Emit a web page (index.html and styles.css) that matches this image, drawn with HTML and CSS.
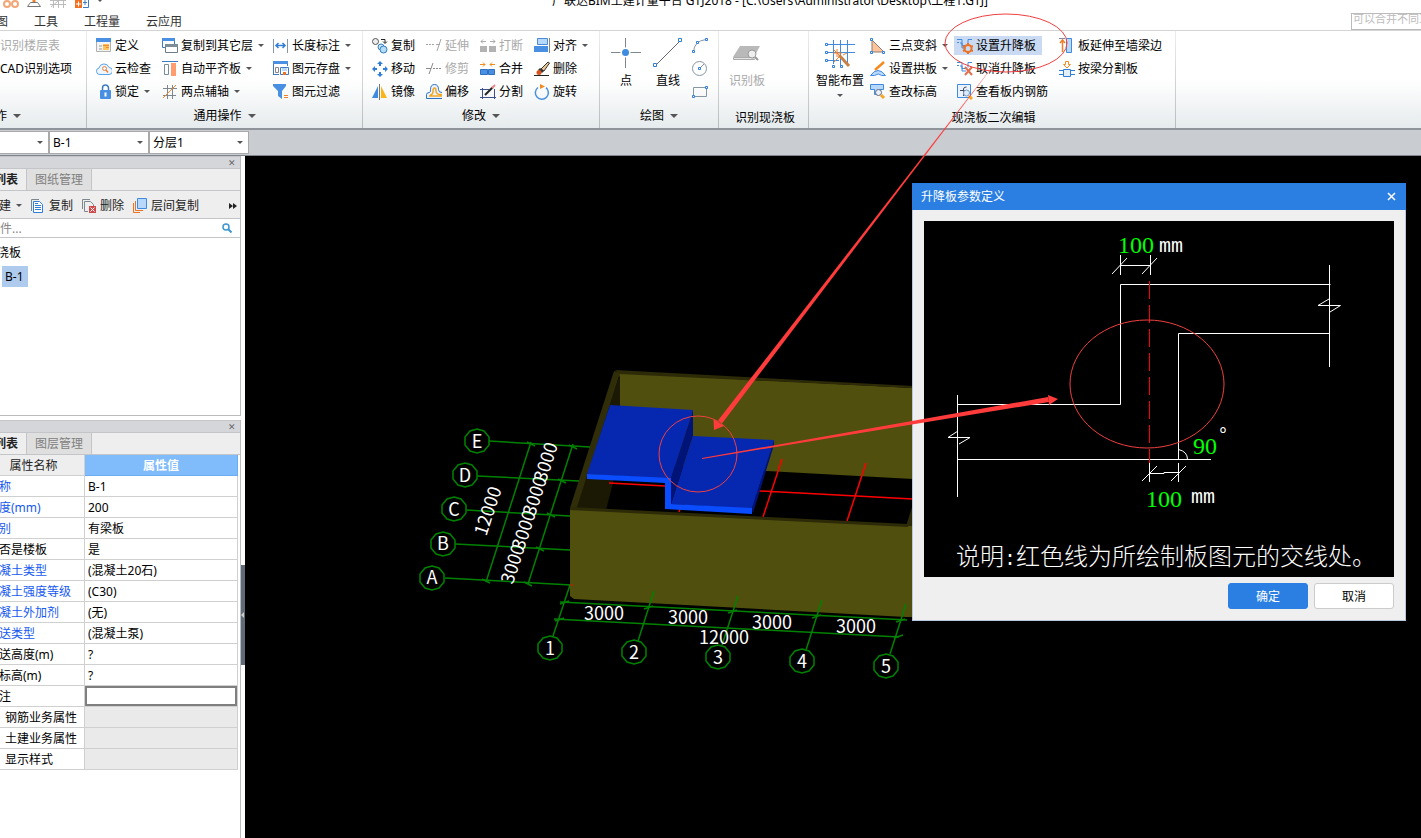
FILE: index.html
```html
<!DOCTYPE html>
<html lang="zh-CN">
<head>
    <meta charset="utf-8">
    <title>GTJ2018</title>
    <link rel="stylesheet" href="styles.css">
</head>
<body>
    <header class="titlebar">
        <div class="quick">
            <svg width="16" height="16" viewBox="0 0 16 16" fill="none" stroke="#f0a878" stroke-width="2"><path d="M3 5l2-1M13 5l-2-1" stroke="#aaa"/><circle cx="4" cy="11" r="3"/><circle cx="12" cy="11" r="3"/></svg>
            <svg width="16" height="16" viewBox="0 0 16 16" fill="none"><path d="M8 2v8" stroke="#ef7f28" stroke-width="3"/><path d="M4.500 9.500h7l3 4h-13z" stroke="#777"/></svg>
            <svg width="18" height="16" viewBox="0 0 18 16" fill="none" stroke="#bbb"><path d="M1 7.500h16M1 11.500h16M4.500 1v14M14.500 1v14M9.500 1v14M2 14L15 3"/></svg>
            <svg width="16" height="16" viewBox="0 0 16 16"><path d="M1 7h7v8H1z" fill="#ef7122"/><path d="M4.500 8.500v5M2 11h5" stroke="#fff"/><path d="M9 14.500h5.500V2" fill="none" stroke="#3d7cc4"/><path d="M9 9.500h4M11 7v5" stroke="#3d7cc4"/></svg>
            <i class="arrow"></i>
        </div>
        <div class="caption">广联达BIM土建计量平台 GTJ2018 - [C:\Users\Administrator\Desktop\工程1.GTJ]</div>
    </header>
    <nav class="menu">
        <a href="#">图</a>
        <a href="#">工具</a>
        <a href="#">工程量</a>
        <a href="#">云应用</a>
        <input class="help-search" type="text" placeholder="可以合并不同工" aria-label="search">
    </nav>

    <div class="ribbon">
        <section class="group g-first">
            <div class="cells one">
                <button class="tool" disabled>识别楼层表</button>
                <button class="tool">CAD识别选项</button>
            </div>
            <div class="group-title">作<i class="arrow big"></i></div>
        </section>

        <section class="group g-common">
            <div class="cells">
                <button class="tool"><svg viewBox="0 0 16 16"><path d="M.5.500h14v13H.5z" fill="#f4f4f4" stroke="#b0b0b0"/><path d="M0 0h15v4H0z" fill="#4a90e2"/><path d="M3 8h3M3 11h3" stroke="#999"/><path d="M7 6h6v6H7z" fill="#ffc35c"/><path d="M7 7.500h6M10 9.500h3" stroke="#f08a2c"/></svg>定义</button>
                <button class="tool"><svg viewBox="0 0 16 16"><path d="M.5.500h12v9H.5z" fill="#fff" stroke="#3d7cc4"/><path d="M0 0h13v3H0z" fill="#4a90e2"/><path d="M3.500 6.500h12v8h-12z" fill="#fff" stroke="#6c7d89"/><path d="M3 6h13v3H3z" fill="#7d8d98"/></svg>复制到其它层<i class="arrow"></i></button>
                <button class="tool"><svg viewBox="0 0 16 16" fill="none"><path d="M.5 1v14M14.500 1v14" stroke="#8796a3"/><path d="M3 7.500h9M5.500 5L3 7.500 5.500 10M9.500 5L12 7.500 9.500 10" stroke="#2f7ed8" stroke-width="1.500"/></svg>长度标注<i class="arrow"></i></button>
                <button class="tool"><svg viewBox="0 0 16 16" fill="none"><path d="M4 13.500a3.300 3.300 0 0 1-1-6.500 5.200 5.200 0 0 1 10-.5 3.500 3.500 0 0 1 0 7z" fill="#eef6ff" stroke="#5ba1ea"/><circle cx="8.500" cy="7.500" r="2" stroke="#ef8332"/><path d="M10 9l2 2.500" stroke="#ef8332" stroke-width="1.500"/></svg>云检查</button>
                <button class="tool"><svg viewBox="0 0 16 16"><path d="M0 .5h16" stroke="#3d7cc4"/><path d="M2.500 3.500h4v10h-4z" fill="#fff" stroke="#7d8d98"/><path d="M9 2h5v13H9z" fill="#ff9c70"/></svg>自动平齐板<i class="arrow"></i></button>
                <button class="tool"><svg viewBox="0 0 16 16" fill="none"><path d="M.5 13.500V.500h14V5M0 13.500h6" stroke="#3d7cc4"/><path d="M0 1.500h15" stroke="#4a90e2" stroke-width="3"/><path d="M2.500 6.500h3v5h-3z" stroke="#888"/><path d="M7.500 6.500h8v7h-8z" fill="#fff" stroke="#3d7cc4"/><path d="M9 7h5v3H9z" fill="#b7d7fb"/><path d="M10 11h3v3h-3z" fill="#ef7122"/></svg>图元存盘<i class="arrow"></i></button>
                <button class="tool"><svg viewBox="0 0 16 16"><path d="M6.500 7V4a3 3 0 0 1 6 0v3" fill="none" stroke="#3d7cc4" stroke-width="1.500"/><rect x="4" y="6" width="11" height="9" rx="1" fill="#4a90e2"/><path d="M9.500 8.500v4" stroke="#fff" stroke-width="2"/></svg>锁定<i class="arrow"></i></button>
                <button class="tool"><svg viewBox="0 0 16 16" fill="none"><path d="M5.500 1v14M10.500 1v14M1 4.500h14M1 11.500h13" stroke="#7d8790"/><path d="M1 14L14 1" stroke="#f08a2c"/></svg>两点辅轴<i class="arrow"></i></button>
                <button class="tool"><svg viewBox="0 0 16 16"><path d="M0 0h13v2L9 7v8l-4-3V7L0 2z" fill="#4a90e2"/><path d="M11 11.500h4M11 13.500h4" stroke="#ef7f28"/></svg>图元过滤</button>
            </div>
            <div class="group-title">通用操作<i class="arrow big"></i></div>
        </section>

        <section class="group g-edit">
            <div class="cells">
                <button class="tool"><svg viewBox="0 0 16 16" fill="none"><circle cx="3.500" cy="3.500" r="3" fill="#eee" stroke="#555"/><path d="M9 1.500h4V5M11 3.500l2 2 2-2" stroke="#222"/><circle cx="9" cy="9" r="3" fill="#cfe6fb" stroke="#2f7ec0"/><circle cx="11.500" cy="11.500" r="3.500" fill="#b4dcf8" stroke="#2f7ec0"/></svg>复制</button>
                <button class="tool" disabled><svg viewBox="0 0 16 16" fill="none" stroke="#a5a5a5"><path d="M0 6.500h9" stroke-dasharray="2 1"/><path d="M10 6.500h4M15 1l-4 12"/></svg>延伸</button>
                <button class="tool" disabled><svg viewBox="0 0 16 16"><path d="M0 8h7v6H0zM9 8h7v6H9z" fill="#b2b2b2"/><path d="M1 3.500h5M3 1.500l-2 2 2 2M10 3.500h5M13 1.500l2 2-2 2" stroke="#aaa" fill="none"/></svg>打断</button>
                <button class="tool"><svg viewBox="0 0 16 16"><path d="M3.500.500h10v6h-10z" fill="#b7d7fb" stroke="#4a8bd8"/><path d="M0 8h14v6H0z" fill="#4a90e2"/><path d="M15.500 0v15" stroke="#7d8790"/></svg>对齐<i class="arrow"></i></button>
                <button class="tool"><svg viewBox="0 0 16 16" fill="#2f7ed8"><path d="M8 0l3 3H9v2H7V3H5zM8 16l3-3H9v-2H7v2H5zM0 8l3-3v2h2v2H3v2zM16 8l-3-3v2h-2v2h2v2z"/></svg>移动</button>
                <button class="tool" disabled><svg viewBox="0 0 16 16" fill="none" stroke="#8a8a8a"><path d="M0 7.500h5M7 2L3 13"/><path d="M7 7.500h9" stroke-dasharray="2 1"/></svg>修剪</button>
                <button class="tool"><svg viewBox="0 0 16 16"><path d="M.5 8.500h7v5h-7zM8.500 8.500h6v5h-6z" fill="#4a90e2" stroke="#2f6fc0"/><path d="M0 3.500h5M3 1.500l2 2-2 2M10 3.500h5M12 1.500l-2 2 2 2" stroke="#ef8c1c" fill="none"/></svg>合并</button>
                <button class="tool"><svg viewBox="0 0 16 16"><path d="M7 8l7-7 1.500 1L10 10z" fill="#e9c896" stroke="#333"/><path d="M6 7l4 3-2 2-4-3z" fill="#333"/><circle cx="5" cy="11.500" r="2.500" fill="#d9541e"/><path d="M0 14.500h15" stroke="#222"/></svg>删除</button>
                <button class="tool"><svg viewBox="0 0 16 16"><path d="M6 2v12H0z" fill="#3f8be0"/><path d="M7.500 0v16" stroke="#777"/><path d="M9 2v12h6z" fill="#fbb416"/></svg>镜像</button>
                <button class="tool"><svg viewBox="0 0 16 16" fill="none"><path d="M16 14.500H.5v-4q0-2 3-2 1 0 1-3 0-5 4-5t4 5q0 3 3.500 3" fill="#eaf3fd" stroke="#2f6fc0"/><path d="M16 12H3M4 11q3 0 3-4 0-3 1.500-3T10 7q0 4 6 3.500" stroke="#f5a623" stroke-width="1.500"/></svg>偏移</button>
                <button class="tool"><svg viewBox="0 0 16 16" fill="none"><path d="M2.500 4v11M14.500 5v10M0 5.500h9M0 13.500h16" stroke="#3e4f8a"/><path d="M5 11l8-8" stroke="#222" stroke-width="2"/><path d="M12 4l3-3" stroke="#e88" stroke-width="2"/></svg>分割</button>
                <button class="tool"><svg viewBox="0 0 16 16" fill="none"><path d="M4 3.500a6.500 6.500 0 1 0 8 .2" stroke="#4a90e2" stroke-width="1.500"/><path d="M6 0l5 2.500L6 5z" fill="#f58a1f"/></svg>旋转</button>
            </div>
            <div class="group-title">修改<i class="arrow big"></i></div>
        </section>

        <section class="group g-draw">
            <div class="wide">
                <button class="large"><svg viewBox="0 0 30 30"><path d="M14.500 0v30M0 14.500h30" stroke="#7d8790"/><circle cx="14.500" cy="14.500" r="5" fill="#fff"/><circle cx="14.500" cy="14.500" r="3.500" fill="#3f8be0"/></svg>点</button>
                <button class="large"><svg viewBox="0 0 30 30" fill="#fff"><path d="M3 27L27 3" stroke="#667"/><path d="M.5 25.500h3v3h-3zM25.500.500h3v3h-3z" stroke="#2f7ed8"/></svg>直线</button>
                <div class="cells one shapes">
                    <button class="tool" aria-label="arc"><svg viewBox="0 0 16 16" fill="#fff"><path d="M1.500 14Q2 3 14 1.500" fill="none" stroke="#8796a3"/><path d="M.5 12.500h2v2h-2zM4.500 3.500h2v2h-2zM13.500.500h2v2h-2z" stroke="#2f7ed8"/></svg></button>
                    <button class="tool" aria-label="circle"><svg viewBox="0 0 16 16" fill="none"><circle cx="7.500" cy="7.500" r="7" stroke="#8796a3"/><path d="M8 7l4-4" stroke="#889"/><path d="M6.500 6.500h2v2h-2z" stroke="#2f7ed8"/></svg></button>
                    <button class="tool" aria-label="rectangle"><svg viewBox="0 0 16 16" fill="#fff"><path d="M1.500 3.500h13v9h-13z" fill="none" stroke="#8796a3"/><path d="M.5 11.500h2v2h-2zM13.500 2.500h2v2h-2z" stroke="#2f7ed8"/></svg></button>
                </div>
            </div>
            <div class="group-title">绘图<i class="arrow big"></i></div>
        </section>

        <section class="group g-detect">
            <div class="wide">
                <button class="large" disabled><svg viewBox="0 0 30 30"><path d="M8 8h20l-6 11H1z" fill="#b9b9b9"/><path d="M1.500 19.500h20l1 2h-21z" fill="#e4e4e4" stroke="#aaa"/><circle cx="20" cy="16" r="4" fill="#eee" stroke="#999"/><path d="M23 19l3 3" stroke="#999" stroke-width="2"/></svg>识别板</button>
            </div>
            <div class="group-title low">识别现浇板</div>
        </section>

        <section class="group g-slab">
            <div class="wide">
                <button class="large smart"><svg viewBox="0 0 30 30" fill="none"><path d="M2 6.500h28M2 14.500h28M2 22.500h12M8.500 2v24M15.500 2v26M22.500 2v26" stroke="#3f8be0"/><path d="M.5 5.500h2v2h-2zM.5 13.500h2v2h-2zM.5 21.500h2v2h-2zM7.500 27.500h2v2h-2zM15.500 27.500h2v2h-2z" fill="#fff" stroke="#2f7ed8"/><path d="M9 12l6 6M9 24l5-5M12 11v8M8 15h9M18 17l4-2" stroke="#ef7f28"/><path d="M14 17l10 11" stroke="#c98043" stroke-width="3"/></svg>智能布置<i class="arrow"></i></button>
                <div class="cells">
                    <button class="tool"><svg viewBox="0 0 16 16"><path d="M2 2v12h12z" fill="#ffc49c" stroke="#8a7a70"/><path d="M.5.500h2v2h-2zM.5 13.500h2v2h-2zM12.500 13.500h2v2h-2z" fill="#fff" stroke="#2f7ed8"/></svg>三点变斜<i class="arrow"></i></button>
                    <button class="tool active"><svg viewBox="0 0 16 16" fill="none"><path d="M0 1.500h5v6h4M3 5h2v5h4M15 1.500h-4v5M0 4.500h2" stroke="#3f8be0"/><circle cx="11" cy="10.500" r="3.500" stroke="#ef7122" stroke-width="2"/><path d="M11 5v2M11 14v2M6 8l2 1M14 12l2 1M16 8l-2 1M8 12l-2 1" stroke="#ef7122" stroke-width="2"/></svg>设置升降板</button>
                    <button class="tool"><svg viewBox="0 0 16 16" fill="none"><path d="M3.500 14V3M1 5l2.500-3L6 5" stroke="#ef7f28" stroke-width="1.500"/><path d="M0 .5h6" stroke="#889"/><path d="M7.500.500v14h5V.500z" fill="#b7d7fb" stroke="#3f8be0"/></svg>板延伸至墙梁边</button>
                    <button class="tool"><svg viewBox="0 0 16 16" fill="none"><path d="M5 9l9-8" stroke="#f58a1f" stroke-width="2.500"/><path d="M.5 14.500Q4 9.500 8 9.500t7.500 5h-4q-3-3-7 0z" fill="#b7d7fb" stroke="#3f8be0"/></svg>设置拱板<i class="arrow"></i></button>
                    <button class="tool"><svg viewBox="0 0 16 16" fill="none"><path d="M0 1.500h5v6h4M3 5h2v5h4M15 1.500h-4v5M0 4.500h2" stroke="#3f8be0"/><path d="M8 6l7 8M15 6l-7 8" stroke="#e0714f" stroke-width="2"/></svg>取消升降板</button>
                    <button class="tool"><svg viewBox="0 0 16 16" fill="none"><path d="M6.500.500h3v3h2L8 7 4.500 3.500h2z" stroke="#f58a1f"/><path d="M4.500 8.500h7v7h-7zM0 9.500h4M12 9.500h4M0 13.500h4M12 13.500h4" stroke="#2f7ed8" fill="#e2effd"/></svg>按梁分割板</button>
                    <button class="tool"><svg viewBox="0 0 16 16" fill="none"><path d="M.5.500h13v5h-4v5h-5v-5h-4z" fill="#b7d7fb" stroke="#3f8be0"/><circle cx="8.500" cy="8.500" r="3" fill="#eaf3fd" stroke="#667"/><path d="M11 11l3 3" stroke="#f5a623" stroke-width="3"/></svg>查改标高</button>
                    <button class="tool"><svg viewBox="0 0 16 16" fill="none"><path d="M.5.500h13v13H.5z" fill="#eaf3fd" stroke="#3f8be0"/><path d="M6.500 12V5q0-2 3-2M3 6.500h8" stroke="#445"/><circle cx="9.500" cy="9" r="3" stroke="#7a9cc6" fill="#dbe9fa"/><path d="M12 12l3 3" stroke="#f5a623" stroke-width="3"/></svg>查看板内钢筋</button>
                </div>
            </div>
            <div class="group-title low">现浇板二次编辑</div>
        </section>
    </div>

    <div class="context">
        <label class="picker"><select aria-label="type"><option></option></select></label>
        <label class="picker"><select aria-label="component"><option>B-1</option></select></label>
        <label class="picker"><select aria-label="layer"><option>分层1</option></select></label>
    </div>

    <main class="workspace">
        <aside class="sidebar">
            <section class="panel list-panel">
                <div class="panel-head"><button class="close" aria-label="close">✕</button></div>
                <div class="tabs">
                    <button class="tab current">列表</button>
                    <button class="tab">图纸管理</button>
                </div>
                <div class="toolbar">
                    <button class="new">建<i class="arrow"></i></button>
                    <button><svg width="16" height="16" viewBox="0 0 16 16" fill="none"><path d="M1.500 13V1.500H9" stroke="#7d8790"/><path d="M3.500 3.500h6l3 3v8h-9z" fill="#fff" stroke="#2f7ed8"/><path d="M5 7.500h6M5 9.500h6M5 11.500h6M5 5.500h3" stroke="#2f7ed8"/></svg>复制</button>
                    <button><svg width="16" height="16" viewBox="0 0 16 16" fill="none"><path d="M1.500 11V1.500H9M3.500 13.500v-10h6l3 3V8M3.500 13.500H7" stroke="#7d8790"/><path d="M8 8h7v7H8z" fill="#cf4a4a"/><path d="M9.500 9.500l4 4M13.500 9.500l-4 4" stroke="#fff"/></svg>删除</button>
                    <button><svg width="16" height="16" viewBox="0 0 16 16" fill="none"><path d="M1.500 5v9.500H8M3.500 3v9.500H11" stroke="#ef7122"/><path d="M5.500.500h9v10h-9z" fill="#b7d7fb" stroke="#3f8be0"/></svg>层间复制</button>
                    <button class="more" aria-label="more"><svg width="8" height="8" viewBox="0 0 8 8"><path d="M0 1l4 3-4 3zM4 1l4 3-4 3z" fill="#222"/></svg></button>
                </div>
                <div class="filter">
                    <input type="text" placeholder="件..." aria-label="filter">
                    <svg width="10" height="10" viewBox="0 0 10 10" fill="none" stroke="#3d96d2"><circle cx="4" cy="4" r="3" stroke-width="1.500"/><path d="M6 6l3.500 3.500" stroke-width="2"/></svg>
                </div>
                <ul class="tree">
                    <li>浇板</li>
                    <li><span class="picked">B-1</span></li>
                </ul>
            </section>

            <section class="panel props-panel">
                <div class="panel-head"><button class="close" aria-label="close">✕</button></div>
                <div class="tabs">
                    <button class="tab current">列表</button>
                    <button class="tab">图层管理</button>
                </div>
                <table class="props">
                    <thead>
                        <tr><th>属性名称</th><th class="value-head">属性值</th></tr>
                    </thead>
                    <tbody>
                        <tr><td class="blue">称</td><td>B-1</td></tr>
                        <tr><td class="blue">度(mm)</td><td>200</td></tr>
                        <tr><td class="blue">别</td><td>有梁板</td></tr>
                        <tr><td>否是楼板</td><td>是</td></tr>
                        <tr><td class="blue">凝土类型</td><td>(混凝土20石)</td></tr>
                        <tr><td class="blue">凝土强度等级</td><td>(C30)</td></tr>
                        <tr><td class="blue">凝土外加剂</td><td>(无)</td></tr>
                        <tr><td class="blue">送类型</td><td>(混凝土泵)</td></tr>
                        <tr><td>送高度(m)</td><td>?</td></tr>
                        <tr><td>标高(m)</td><td>?</td></tr>
                        <tr><td>注</td><td class="editing"><input type="text" aria-label="注"></td></tr>
                        <tr class="sub"><td>钢筋业务属性</td><td></td></tr>
                        <tr class="sub"><td>土建业务属性</td><td></td></tr>
                        <tr class="sub"><td>显示样式</td><td></td></tr>
                    </tbody>
                </table>
            </section>
        </aside>
        <div class="splitter"><button class="grip" aria-label="collapse"></button></div>

        <div class="viewport">
            <svg class="scene" width="100%" height="100%">
                <defs>
                    <path id="bubble" d="M0-12L7-10 12-4V4L7 10 0 12-7 10-12 4V-4L-7-10z"/>
                </defs>
                <g transform="translate(-245 -156)">
                    <!-- walls -->
                    <path d="M619 373L913 388V479L619 463z" fill="#504f0e"/>
                    <path d="M615 370L913 386V388L619 374z" fill="#2c2a07"/>
                    <path d="M620 374V440L613 483 606 510 574 508z" fill="#1b1904"/>
                    <path d="M614 371L620 373 576 510 570 508z" fill="#302e09"/>
                    <path d="M913 504L906 526H913z" fill="#2c2a07"/>
                    <!-- reference lines on the floor -->
                    <path d="M609 483L913 499M782 459L763 517M866 463L847 521M681 506L679 512" stroke="#f00" stroke-width="1.500"/>
                    <path d="M570 508L908 526 913 526V617L906 617 574 599 570 596z" fill="#504f0e"/>
                    <path d="M570 507L908 524V527L570 510z" fill="#2c2a07"/>
                    <!-- slab -->
                    <path d="M610 405L693 410 671 479 587 474z" fill="#0628b0"/>
                    <path d="M693 436L774 440 752 509 671 504z" fill="#0628b0"/>
                    <path d="M693 410V436L671 504V478z" fill="#001478"/>
                    <path d="M774 440V445L753 513 752 508z" fill="#001478"/>
                    <path d="M587 474L671 478V504L752 508V514L665 509V483L587 479z" fill="#0a4cff"/>
                    <!-- axes -->
                    <g stroke="#008200" stroke-width="1.500" fill="none">
                        <path d="M489 441L590 447M477 476L579 481M466 510L570 516M455 544L570 550M445 578L571 585"/>
                        <path d="M531 442L486 582M573 444L528 584"/>
                        <path d="M560 602L907 620M554 619L899 637"/>
                        <path d="M570 585L553 636M654 591L638 641M738 596L722 645M822 600L806 650M906 604L890 654"/>
                        <path d="M527 442l8 4M482 579l8 4M569 445l8 4M558 479l8 4M547 513l8 4M536 547l8 4M524 582l8 4"/>
                        <path d="M560 604l9-3M644 609l9-3M728 613l9-3M812 618l9-3M896 622l9-3M555 621l9-3M894 638l9-3"/>
                        <use href="#bubble" x="477" y="441"/><use href="#bubble" x="465" y="475"/><use href="#bubble" x="454" y="509"/><use href="#bubble" x="443" y="544"/><use href="#bubble" x="432" y="578"/>
                        <use href="#bubble" x="550" y="648"/><use href="#bubble" x="634" y="652"/><use href="#bubble" x="718" y="657"/><use href="#bubble" x="802" y="661"/><use href="#bubble" x="886" y="666"/>
                    </g>
                    <g class="mark">
                        <text x="477" y="448">E</text><text x="465" y="482">D</text><text x="454" y="516">C</text><text x="443" y="550">B</text><text x="432" y="584">A</text>
                        <text x="550" y="655">1</text><text x="634" y="659">2</text><text x="718" y="664">3</text><text x="802" y="668">4</text><text x="886" y="673">5</text>
                        <text x="604" y="620">3000</text><text x="688" y="624">3000</text><text x="772" y="629">3000</text><text x="856" y="633">3000</text><text x="724" y="644">12000</text>
                        <text transform="translate(494 513) rotate(-72)">12000</text>
                        <text transform="translate(552 464) rotate(-72)">3000</text>
                        <text transform="translate(541 498) rotate(-72)">3000</text>
                        <text transform="translate(530 532) rotate(-72)">3000</text>
                        <text transform="translate(519 566) rotate(-72)">3000</text>
                    </g>
                    <path d="M570 585h3" stroke="#f00"/>
                </g>
            </svg>

            <div class="dialog" role="dialog" aria-labelledby="dialogTitle">
                <div class="dialog-title">
                    <span id="dialogTitle">升降板参数定义</span>
                    <button aria-label="close"><svg width="9" height="9" viewBox="0 0 9 9"><path d="M1 1l7 7M8 1L1 8" stroke="#fff" stroke-width="1.500"/></svg></button>
                </div>
                <div class="dialog-body">
                    <svg class="detail" width="470" height="356">
                        <g transform="translate(-924 -221)">
                            <g stroke="#fff" fill="none">
                                <path d="M1120.500 255v20M1150.500 255v20M1120 265.500h30M1112 274l15-16M1142 274l15-16"/>
                                <path d="M1330.500 284.500h-210v120h-163M1329.500 265v102M1329 333.500h-150.500v126M957.500 395v102M957 459.500h254"/>
                                <path d="M1329 299l-11 6.500h22.500l-10.500 6.500M958 431l-10 6.500h22l-11 6.500"/>
                                <path d="M1178.500 449.500q9 2 9 10"/>
                                <path d="M1149.500 463v19M1178.500 463v19M1149 473.500h15v-1h15M1142 481l15-15M1171 481l15-15"/>
                            </g>
                            <path d="M1149.500 281V463" stroke="#f00" stroke-dasharray="18 6"/>
                            <g class="size">
                                <text x="1118" y="253">100</text>
                                <text x="1193" y="454">90</text>
                                <text x="1146" y="507">100</text>
                            </g>
                            <g class="unit">
                                <text x="1159" y="252">mm</text>
                                <text x="1191" y="503">mm</text>
                                <text x="1217" y="441">°</text>
                            </g>
                            <text class="note" x="956" y="565">说明<tspan class="colon">:</tspan>红色线为所绘制板图元的交线处。</text>
                        </g>
                    </svg>
                    <div class="dialog-actions">
                        <button class="primary">确定</button>
                        <button>取消</button>
                    </div>
                </div>
            </div>
        </div>
    </main>

    <!-- red callouts drawn over the whole window -->
    <svg class="callouts" width="100%" height="100%">
        <g fill="none" stroke="#f04040">
            <ellipse cx="1006" cy="43" rx="61" ry="29"/>
            <ellipse cx="698" cy="454" rx="39" ry="38"/>
            <ellipse cx="1147" cy="384" rx="77" ry="64"/>
        </g>
        <g fill="#ff3b3b">
            <path d="M1003 53L722 423.500 718 420.500z"/>
            <path d="M714 430L713.500 419 724 426z"/>
            <path d="M702 458L1048 397 1049 402 702 459z"/>
            <path d="M1058 399L1048 395 1049 405z"/>
        </g>
    </svg>
</body>
</html>
```
FILE: styles.css
```css
* {
    box-sizing: border-box;
}
body {
    margin: 0;
    height: 100vh;
    display: flex;
    flex-direction: column;
    overflow: hidden;
    background: #fff;
    color: #000;
    font: 12px/16px "Noto Sans", "Noto Sans CJK SC", sans-serif;
}
button, input, select {
    font: inherit;
    color: inherit;
    margin: 0;
    padding: 0;
    border: 0;
    background: none;
}
button {
    display: flex;
    align-items: center;
    white-space: nowrap;
}
svg {
    flex: none;
    display: block;
}
.arrow {
    flex: none;
    border: 3px solid transparent;
    border-top-color: #555;
    border-bottom: 0;
}
.arrow.big {
    border-width: 4px 4px 0;
}

/* title and menu */
.titlebar {
    display: flex;
    align-items: center;
    height: 23px;
    margin-top: -11px;
    flex: none;
}
.quick {
    display: flex;
    align-items: center;
    gap: 7px;
    width: 119px;
    padding-left: 3px;
}
.caption {
    flex: 1;
    text-align: center;
    white-space: nowrap;
}
.menu {
    display: flex;
    align-items: center;
    gap: 26px;
    height: 19px;
    flex: none;
    margin-left: -4px;
    border-bottom: 1px solid #d4d4d4;
}
.menu a {
    padding-top: 2px;
    color: #333;
    text-decoration: none;
    white-space: nowrap;
}
.help-search {
    width: 80px;
    height: 17px;
    margin: 0 -10px 0 auto;
    padding: 0 1px 5px;
    border: 1px solid #bbb;
    font-size: 11px;
}
.help-search::placeholder {
    color: #bbb;
}

/* ribbon */
.ribbon {
    display: flex;
    flex: none;
    height: 99px;
    background: linear-gradient(#fff 50%, #e6ebed);
    border-bottom: 2px solid #8f939a;
}
.group {
    flex: none;
    display: flex;
    flex-direction: column;
    padding-top: 3px;
    border-right: 1px solid;
    border-image: linear-gradient(#eee, #b8bbbd) 1;
}
.g-first { width: 87px; }
.g-common { width: 276px; }
.g-edit { width: 237px; }
.g-draw { width: 119px; }
.g-detect { width: 90px; }
.g-slab { width: 367px; }
.cells {
    display: grid;
    grid-auto-rows: 23px;
    align-items: center;
    justify-items: start;
    height: 69px;
}
.g-common .cells {
    grid-template-columns: 66px 111px auto;
    padding-left: 6px;
}
.g-edit .cells {
    grid-template-columns: 54px 54px 54px auto;
    padding-left: 6px;
}
.g-slab .cells {
    grid-template-columns: 87px 102px auto;
}
.tool {
    height: 19px;
    gap: 3px;
    padding: 0 6px 0 3px;
}
.g-first .tool {
    padding: 0;
}
.tool svg {
    width: 16px;
    height: 16px;
}
.tool .arrow {
    margin-left: 2px;
}
.tool:disabled, .large:disabled {
    color: #aaa;
}
.tool.active {
    background: #c9daf2;
}
.group-title {
    display: flex;
    align-items: center;
    justify-content: center;
    gap: 6px;
    height: 25px;
}
.group-title.low {
    padding: 4px 0 0 3px;
}
.g-first .group-title {
    justify-content: flex-start;
    margin-left: -5px;
}
.wide {
    display: flex;
    height: 69px;
}
.large {
    flex-direction: column;
    width: 42px;
    padding-top: 4px;
}
.large svg {
    width: 30px;
    height: 30px;
    margin-bottom: 5px;
}
.g-draw .wide {
    padding-left: 5px;
}
.g-detect .wide {
    padding-left: 7px;
}
.large.smart {
    width: 58px;
    padding-left: 4px;
}
.smart .arrow {
    margin-top: 5px;
}

/* component pickers */
.context {
    display: flex;
    align-items: center;
    flex: none;
    height: 26px;
    margin-left: -51px;
    background: #c9ccd1;
    border-bottom: 1px solid #7f848d;
}
.picker {
    position: relative;
    width: 100px;
}
.picker select {
    display: block;
    appearance: none;
    width: 100%;
    height: 23px;
    padding: 0 3px;
    background: #fff;
    border: 1px solid #a9a9a9;
}
.picker::after {
    content: "";
    position: absolute;
    right: 6px;
    top: 10px;
    border: 3px solid transparent;
    border-top-color: #555;
    border-bottom: 0;
}

/* side panels */
.workspace {
    flex: 1;
    display: flex;
    min-height: 0;
}
.sidebar {
    display: flex;
    flex-direction: column;
    gap: 4px;
    width: 241px;
    flex: none;
    overflow: hidden;
}
.panel {
    border: solid #b9bbbf;
    border-width: 0 1px 1px 0;
}
.list-panel {
    height: 260px;
}
.props-panel {
    flex: 1;
    border-bottom: 0;
}
.panel-head {
    display: flex;
    align-items: center;
    justify-content: flex-end;
    height: 12px;
    padding-right: 4px;
    background: #d5d6da;
    border-top: 1px solid #c3c5c9;
}
.close {
    font-size: 9px;
    line-height: 10px;
    color: #666;
}
.tabs {
    display: flex;
    height: 23px;
    background: #eee;
    border: solid #c3c5c9;
    border-width: 1px 0;
}
.tab {
    width: 65px;
    justify-content: center;
    background: #dfdfdf;
    border-right: 1px solid #c3c5c9;
    color: #808080;
}
.tab.current {
    width: 27px;
    justify-content: flex-end;
    padding-right: 8px;
    background: #eee;
    color: #222;
    font-weight: bold;
}
.toolbar {
    display: flex;
    align-items: center;
    gap: 8px;
    height: 28px;
    margin-left: -1px;
    padding-top: 2px;
    background: #eee;
    border-bottom: 1px solid #c3c5c9;
    color: #222;
}
.toolbar button {
    gap: 3px;
}
.toolbar .new {
    gap: 5px;
}
.toolbar .more {
    margin: 0 3px 0 auto;
}
.filter {
    display: flex;
    align-items: center;
    height: 19px;
    padding-right: 8px;
    border-bottom: 1px solid #c3c5c9;
}
.filter input {
    flex: 1;
    min-width: 0;
    height: 18px;
}
.filter input::placeholder {
    color: #888;
}
.tree {
    list-style: none;
    margin: 0;
    padding: 3px 0;
}
.tree li {
    height: 24px;
    line-height: 24px;
    margin-left: -3px;
}
.picked {
    display: inline-block;
    margin-left: 5px;
    padding: 0 4px 0 3px;
    line-height: 21px;
    background: #aecbee;
}
.props {
    width: 238px;
    table-layout: fixed;
    border-collapse: separate;
    border-spacing: 0;
}
.props th, .props td {
    height: 21px;
    padding: 2px 3px 0;
    line-height: 16px;
    white-space: nowrap;
    border: solid #d0d0d0;
    border-width: 0 1px 1px 0;
}
.props th {
    font-weight: normal;
    color: #222;
    background: #eee;
}
.props th:first-child {
    width: 85px;
    padding: 2px 17px 0 0;
}
.props .value-head {
    background: #80bbfb;
    border-color: #6cacf2;
    color: #fff;
    font-weight: bold;
}
.props td:first-child {
    padding: 2px 0 0;
    text-indent: -1px;
}
.props .blue {
    color: #1559f0;
}
.props .editing {
    padding: 0;
}
.editing input {
    display: block;
    width: 100%;
    height: 20px;
    border: 2px solid #7f7f7f;
}
.props .sub td:first-child {
    text-indent: 5px;
}
.props .sub td:last-child {
    background: #eaeaea;
}
.splitter {
    flex: none;
    width: 4px;
    padding-top: 409px;
    background: #fff;
}
.grip {
    width: 4px;
    height: 100px;
    background: #606b77;
}
.grip::before {
    content: "";
    border: 3px solid transparent;
    border-right-color: #ccc;
    border-left: 0;
}

/* 3d view */
.viewport {
    position: relative;
    flex: 1;
    min-width: 0;
    background: #000;
}
.scene {
    position: absolute;
    inset: 0;
}
.mark text {
    fill: #fff;
    font: 18px "Noto Sans CJK SC", sans-serif;
    text-anchor: middle;
}
.callouts {
    position: absolute;
    inset: 0;
    pointer-events: none;
}

/* parameter window */
.dialog {
    position: absolute;
    left: 667px;
    top: 27px;
    background: #efefef;
}
.dialog-title {
    display: flex;
    align-items: center;
    justify-content: space-between;
    height: 27px;
    padding: 0 10px 0 9px;
    background: #2b7fe2;
    color: #fff;
}
.dialog-body {
    padding: 11px;
    border: 1px solid #b9c6de;
    border-top: 0;
}
.detail {
    background: #000;
}
.size text {
    fill: #0f0;
    font: 24px "Liberation Serif", serif;
}
.unit text {
    fill: #fff;
    font: 20px "Liberation Mono", monospace;
}
.note {
    fill: #fff;
    font: 300 24px "Noto Sans CJK SC", sans-serif;
}
.note .colon {
    font: 20px "Liberation Mono", monospace;
}
.dialog-actions {
    display: flex;
    justify-content: flex-end;
    gap: 6px;
    margin-top: 6px;
}
.dialog-actions button {
    justify-content: center;
    width: 80px;
    height: 26px;
    padding-top: 1px;
    background: #fff;
    border: 1px solid #ccc;
    border-radius: 3px;
}
.dialog-actions .primary {
    background: #2b7fe2;
    border-color: #2b7fe2;
    color: #fff;
}
```
